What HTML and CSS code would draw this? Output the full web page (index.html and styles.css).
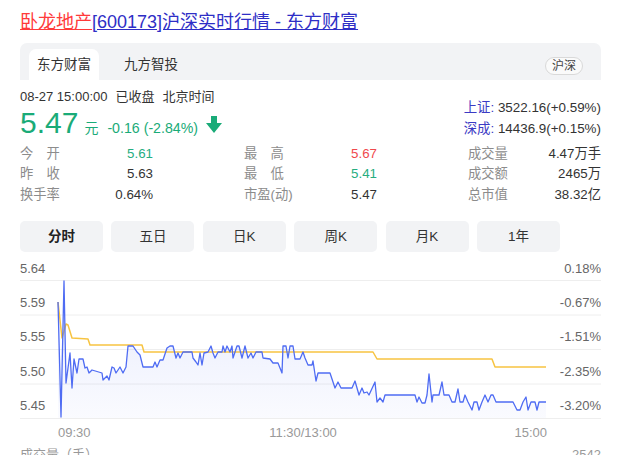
FILE: index.html
```html
<!DOCTYPE html>
<html lang="zh-CN">
<head>
<meta charset="utf-8">
<title>卧龙地产[600173]沪深实时行情 - 东方财富</title>
<link rel="stylesheet" href="styles.css">
</head>
<body>
<div class="page">
  <h1 class="title"><a class="name" href="#">卧龙地产</a><a class="rest" href="#">[600173]沪深实时行情 - 东方财富</a></h1>

  <div class="tabbar">
    <div class="tab active">东方财富</div>
    <div class="tab">九方智投</div>
    <div class="pill">沪深</div>
  </div>

  <div class="quote">
    <div class="quote-left">
      <div class="time"><span>08-27 15:00:00</span><span>已收盘</span><span>北京时间</span></div>
      <div class="price-row">
        <span class="price">5.47</span>
        <span class="unit">元</span>
        <span class="change">-0.16 (-2.84%)</span>
        <svg class="arrow" width="16" height="17" viewBox="0 0 16 17"><path d="M5 0H11V7H16L8 17L0 7H5Z" fill="#1aab78"/></svg>
      </div>
    </div>
    <div class="quote-right">
      <div class="idx"><span class="idx-name">上证:</span> 3522.16(+0.59%)</div>
      <div class="idx"><span class="idx-name">深成:</span> 14436.9(+0.15%)</div>
    </div>
  </div>

  <div class="stats">
    <div class="stat"><span class="lbl">今　开</span><span class="val green">5.61</span></div>
    <div class="stat"><span class="lbl">最　高</span><span class="val red">5.67</span></div>
    <div class="stat"><span class="lbl">成交量</span><span class="val">4.47万手</span></div>
    <div class="stat"><span class="lbl">昨　收</span><span class="val">5.63</span></div>
    <div class="stat"><span class="lbl">最　低</span><span class="val green">5.41</span></div>
    <div class="stat"><span class="lbl">成交额</span><span class="val">2465万</span></div>
    <div class="stat"><span class="lbl">换手率</span><span class="val">0.64%</span></div>
    <div class="stat"><span class="lbl">市盈(动)</span><span class="val">5.47</span></div>
    <div class="stat"><span class="lbl">总市值</span><span class="val">38.32亿</span></div>
  </div>

  <div class="periods">
    <div class="period current">分时</div>
    <div class="period">五日</div>
    <div class="period">日K</div>
    <div class="period">周K</div>
    <div class="period">月K</div>
    <div class="period">1年</div>
  </div>

  <svg class="chart" width="581" height="193" viewBox="0 0 581 193">
    <defs>
      <linearGradient id="area" x1="0" y1="0" x2="0" y2="1">
        <stop offset="0" stop-color="#5470f0" stop-opacity="0.14"/>
        <stop offset="1" stop-color="#5470f0" stop-opacity="0.03"/>
      </linearGradient>
    </defs>
    <g class="grid">
      <line x1="0" y1="28.5" x2="581" y2="28.5"/>
      <line x1="0" y1="63" x2="581" y2="63"/>
      <line x1="0" y1="97.5" x2="581" y2="97.5"/>
      <line x1="0" y1="132" x2="581" y2="132"/>
      <line x1="0" y1="166.5" x2="581" y2="166.5"/>
    </g>
    <g class="axis">
      <text x="0" y="20.5">5.64</text>
      <text x="0" y="54.5">5.59</text>
      <text x="0" y="89">5.55</text>
      <text x="0" y="123.5">5.50</text>
      <text x="0" y="158">5.45</text>
      <text x="581" y="20.5" text-anchor="end">0.18%</text>
      <text x="581" y="54.5" text-anchor="end">-0.67%</text>
      <text x="581" y="89" text-anchor="end">-1.51%</text>
      <text x="581" y="123.5" text-anchor="end">-2.35%</text>
      <text x="581" y="158" text-anchor="end">-3.20%</text>
    </g>
    <g class="times">
      <text x="38" y="184.5">09:30</text>
      <text x="283" y="184.5" text-anchor="middle">11:30/13:00</text>
      <text x="527" y="184.5" text-anchor="end">15:00</text>
    </g>
    <g transform="translate(-20,-252)">
      <polygon fill="url(#area)" points="58,302 61,417 64,281 66,383 70,353 72,388 74,359 77,373 79,359 83,359 85,368 87,367 89,373 92,370 102,373 103,380 107,376 109,380 112,367 114,368 116,373 120,367 123,373 126,367 128,346 133,346 137,352 140,355 143,367 153,367 155,362 157,367 160,360 163,360 167,348 170,346 173,346 176,358 178,353 180,358 183,352 192,352 193,358 196,362 198,365 200,353 202,365 204,353 208,352 211,346 213,353 215,358 218,352 222,352 223,346 225,352 227,346 230,352 232,346 233,358 237,346 239,346 242,358 245,346 248,358 251,353 253,358 256,352 262,352 263,358 270,359 273,363 278,363 282,373 283,346 286,346 288,358 290,346 293,346 295,359 300,359 303,352 305,358 308,365 312,365 313,361 316,381 318,373 330,373 335,388 338,382 341,388 352,388 355,381 357,388 359,395 362,388 364,393 367,392 369,395 375,382 377,402 380,398 383,402 385,395 415,395 417,402 419,397 422,403 425,403 427,395 429,374 432,402 433,395 439,395 442,382 444,395 449,395 452,402 455,402 458,389 460,402 463,402 465,395 468,402 472,410 474,402 477,402 479,410 482,402 485,395 488,402 491,395 493,395 496,402 513,402 517,410 520,410 523,402 526,397 528,410 531,402 535,402 537,410 539,402 546,402 546,418 58,418"/>
      <polyline class="avg" points="58,302 62,338 66,324 68,325 72,338 88,339 90,345 142,345 144,352 373,352 377,359 492,359 495,367 546,367"/>
      <polyline class="px" points="58,302 61,417 64,281 66,383 70,353 72,388 74,359 77,373 79,359 83,359 85,368 87,367 89,373 92,370 102,373 103,380 107,376 109,380 112,367 114,368 116,373 120,367 123,373 126,367 128,346 133,346 137,352 140,355 143,367 153,367 155,362 157,367 160,360 163,360 167,348 170,346 173,346 176,358 178,353 180,358 183,352 192,352 193,358 196,362 198,365 200,353 202,365 204,353 208,352 211,346 213,353 215,358 218,352 222,352 223,346 225,352 227,346 230,352 232,346 233,358 237,346 239,346 242,358 245,346 248,358 251,353 253,358 256,352 262,352 263,358 270,359 273,363 278,363 282,373 283,346 286,346 288,358 290,346 293,346 295,359 300,359 303,352 305,358 308,365 312,365 313,361 316,381 318,373 330,373 335,388 338,382 341,388 352,388 355,381 357,388 359,395 362,388 364,393 367,392 369,395 375,382 377,402 380,398 383,402 385,395 415,395 417,402 419,397 422,403 425,403 427,395 429,374 432,402 433,395 439,395 442,382 444,395 449,395 452,402 455,402 458,389 460,402 463,402 465,395 468,402 472,410 474,402 477,402 479,410 482,402 485,395 488,402 491,395 493,395 496,402 513,402 517,410 520,410 523,402 526,397 528,410 531,402 535,402 537,410 539,402 546,402"/>
    </g>
  </svg>

  <div class="vol-head"><span>成交量（手）</span><span>2542</span></div>
</div>
</body>
</html>
```

FILE: styles.css
```css
* { box-sizing: border-box; }
html, body { margin: 0; padding: 0; background: #fff; }
body {
  font-family: "Liberation Sans", "Noto Sans CJK SC", sans-serif;
  font-size: 13px;
  color: #333;
  overflow: hidden;
}
.page { width: 581px; margin-left: 20px; }

.title {
  margin: 10px 0 0;
  font-size: 18px;
  font-weight: normal;
  line-height: 24px;
  white-space: nowrap;
}
.title a { text-decoration: underline; }
.title .name { color: #ff3a3a; }
.title .rest { color: #2e2ec6; }

.tabbar {
  margin-top: 9px;
  height: 37px;
  background: #f2f3f5;
  border-radius: 7px 7px 0 0;
  padding: 6px 18px 0 9px;
  display: flex;
  align-items: flex-end;
  gap: 17px;
}
.tab {
  height: 31px;
  line-height: 31px;
  padding: 0 8px;
  font-size: 13.5px;
  color: #333;
}
.tab.active { background: #fff; border-radius: 7px 7px 0 0; }
.pill {
  margin-left: auto;
  align-self: center;
  margin-top: 3px;
  height: 18px;
  line-height: 16px;
  padding: 0 6px;
  border: 1px solid #d9d9d9;
  border-radius: 9px;
  background: #fafafa;
  font-size: 12px;
  color: #444;
}

.quote { display: flex; justify-content: space-between; margin-top: 7.5px; height: 55px; }
.time { line-height: 18px; font-size: 13px; color: #333; }
.time span { margin-right: 8px; }
.price-row { display: flex; align-items: baseline; height: 34px; line-height: 34px; color: #1aab78; }
.price { font-size: 30px; }
.unit { font-size: 14px; margin-left: 6px; }
.change { font-size: 14.2px; margin-left: 9px; }
.arrow { margin-left: 8px; }
.quote-right { padding-top: 9px; text-align: right; }
.idx { line-height: 21px; font-size: 13.4px; color: #333; }
.idx-name { color: #3b3bc4; }

.stats {
  margin-top: 1px;
  display: grid;
  grid-template-columns: repeat(3, 133px);
  justify-content: space-between;
  grid-auto-rows: 20.5px;
  font-size: 13.3px;
  line-height: 20.5px;
}
.stat { display: flex; justify-content: space-between; }
.lbl { color: #8c8c8c; }
.val { color: #333; }
.val.green { color: #27ad7f; }
.val.red { color: #f0484c; }

.periods {
  margin-top: 15.5px;
  display: grid;
  grid-template-columns: repeat(6, 83px);
  gap: 8.4px;
}
.period {
  height: 31px;
  line-height: 31px;
  text-align: center;
  background: #f2f3f5;
  border-radius: 5px;
  font-size: 13.5px;
  color: #333;
}
.period.current { font-weight: bold; color: #222; }

.chart { display: block; overflow: hidden; }
.grid line { stroke: #eeeeee; stroke-width: 1; }
.axis text { font-family: "Liberation Sans", sans-serif; font-size: 13px; fill: #666; }
.times text { font-family: "Liberation Sans", sans-serif; font-size: 13px; fill: #999; }
.avg { fill: none; stroke: #f7c442; stroke-width: 1.5; stroke-linejoin: round; }
.px { fill: none; stroke: #4f6cf3; stroke-width: 1.3; stroke-linejoin: round; }

.vol-head {
  display: flex;
  justify-content: space-between;
  line-height: 18px;
  margin-top: 1px;
  font-size: 13px;
  color: #999;
}
```
